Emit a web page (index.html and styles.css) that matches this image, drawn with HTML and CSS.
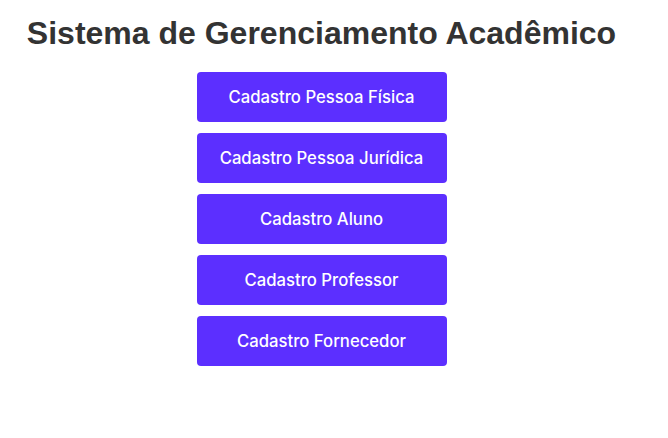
FILE: index.html
```html
<!DOCTYPE html>
<html lang="pt">
<head>
<meta charset="utf-8">
<link rel="stylesheet" href="styles.css">
</head>
<body>
<div class="page">
  <h1 class="title">Sistema de Gerenciamento Acadêmico</h1>
  <nav class="menu">
    <button class="menu-btn">Cadastro Pessoa Física</button>
    <button class="menu-btn">Cadastro Pessoa Jurídica</button>
    <button class="menu-btn">Cadastro Aluno</button>
    <button class="menu-btn">Cadastro Professor</button>
    <button class="menu-btn">Cadastro Fornecedor</button>
  </nav>
</div>
</body>
</html>
```
FILE: styles.css
```css
html, body {
  margin: 0;
  padding: 0;
  background: #fff;
}
.page {
  width: 643px;
  display: flex;
  flex-direction: column;
  align-items: center;
  padding-top: 16px;
}
.title {
  margin: 0 0 22px;
  font-family: "Liberation Sans", Arial, sans-serif;
  font-weight: 700;
  font-size: 32px;
  line-height: 34px;
  color: #333;
}
.menu {
  display: flex;
  flex-direction: column;
  gap: 11px;
}
.menu-btn {
  width: 250px;
  height: 50px;
  border: none;
  border-radius: 4px;
  background: #5c2fff;
  color: #fff;
  font-family: Inter, "Noto Sans", sans-serif;
  font-weight: 500;
  font-size: 16.7px;
  cursor: pointer;
}
```
